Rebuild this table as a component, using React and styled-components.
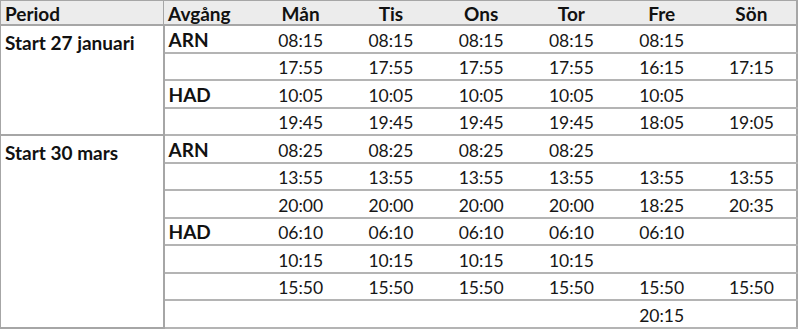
import React from 'react';
import styled, { createGlobalStyle } from 'styled-components';

const GlobalStyle = createGlobalStyle`
	body {
		margin: 0;
		background: #fff;
		font-family: 'Lato', 'Open Sans', sans-serif;
	}
`;

const days = ['Mån', 'Tis', 'Ons', 'Tor', 'Fre', 'Sön'];

const periods = [
	{
		name: 'Start 27 januari',
		groups: [
			{
				from: 'ARN',
				rows: [
					['08:15', '08:15', '08:15', '08:15', '08:15', ''],
					['17:55', '17:55', '17:55', '17:55', '16:15', '17:15'],
				],
			},
			{
				from: 'HAD',
				rows: [
					['10:05', '10:05', '10:05', '10:05', '10:05', ''],
					['19:45', '19:45', '19:45', '19:45', '18:05', '19:05'],
				],
			},
		],
	},
	{
		name: 'Start 30 mars',
		groups: [
			{
				from: 'ARN',
				rows: [
					['08:25', '08:25', '08:25', '08:25', '', ''],
					['13:55', '13:55', '13:55', '13:55', '13:55', '13:55'],
					['20:00', '20:00', '20:00', '20:00', '18:25', '20:35'],
				],
			},
			{
				from: 'HAD',
				rows: [
					['06:10', '06:10', '06:10', '06:10', '06:10', ''],
					['10:15', '10:15', '10:15', '10:15', '', ''],
					['15:50', '15:50', '15:50', '15:50', '15:50', '15:50'],
					['', '', '', '', '20:15', ''],
				],
			},
		],
	},
];

const App = () => {
	let n = 0;
	return (
		<>
			<GlobalStyle />
			<Table>
				<colgroup>
					<col style={{ width: 163 }} />
					<col style={{ width: 92 }} />
					{days.map((d) => (
						<col key={d} />
					))}
				</colgroup>
				<thead>
					<tr>
						<Head>Period</Head>
						<Head>Avgång</Head>
						{days.map((d) => (
							<Head key={d} center>
								{d}
							</Head>
						))}
					</tr>
				</thead>
				<tbody>
					{periods.map((period) => {
						const total = period.groups.reduce((s, g) => s + g.rows.length, 0);
						return period.groups.map((group, gi) =>
							group.rows.map((times, ri) => {
								const tall = n++ % 2 === 0;
								return (
									<Row key={`${period.name}-${gi}-${ri}`} tall={tall}>
										{gi === 0 && ri === 0 && (
											<PeriodCell rowSpan={total}>{period.name}</PeriodCell>
										)}
										<FromCell>{ri === 0 ? group.from : ''}</FromCell>
										{times.map((t, i) => (
											<TimeCell key={i}>{t}</TimeCell>
										))}
									</Row>
								);
							})
						);
					})}
				</tbody>
			</Table>
		</>
	);
};

const Table = styled.table`
	width: 798px;
	border-collapse: collapse;
	table-layout: fixed;
	border: 1px solid #a6a6a6;
	border-bottom: 2px solid #a6a6a6;
	border-right: 2px solid #a6a6a6;
	color: #161616;
	font-size: 17.5px;
	line-height: 1;
`;

const Head = styled.th`
	height: 21px;
	padding: 2px 4px 0;
	background: #ececec;
	font-size: 19px;
	font-weight: 700;
	color: #111;
	text-align: ${(p) => (p.center ? 'center' : 'left')};
	border-bottom: 2px solid #a6a6a6;
	&:first-child {
		border-right: 1px solid #a6a6a6;
	}
`;

const Row = styled.tr.withConfig({ shouldForwardProp: (p) => p !== 'tall' })`
	height: ${(p) => (p.tall ? 28 : 27)}px;
`;

const PeriodCell = styled.td`
	vertical-align: top;
	padding: 7px 4px 0;
	font-size: 19px;
	font-weight: 700;
	color: #111;
	border-right: 2px solid #a6a6a6;
	border-bottom: 2px solid #a6a6a6;
`;

const FromCell = styled.td`
	vertical-align: bottom;
	padding: 0 4px 3px;
	font-size: 19px;
	font-weight: 700;
	color: #111;
	border-bottom: 2px solid #b4b4b4;
`;

const TimeCell = styled.td`
	vertical-align: bottom;
	padding: 0 0 3px;
	text-align: center;
	border-bottom: 2px solid #b4b4b4;
`;

export default App;
